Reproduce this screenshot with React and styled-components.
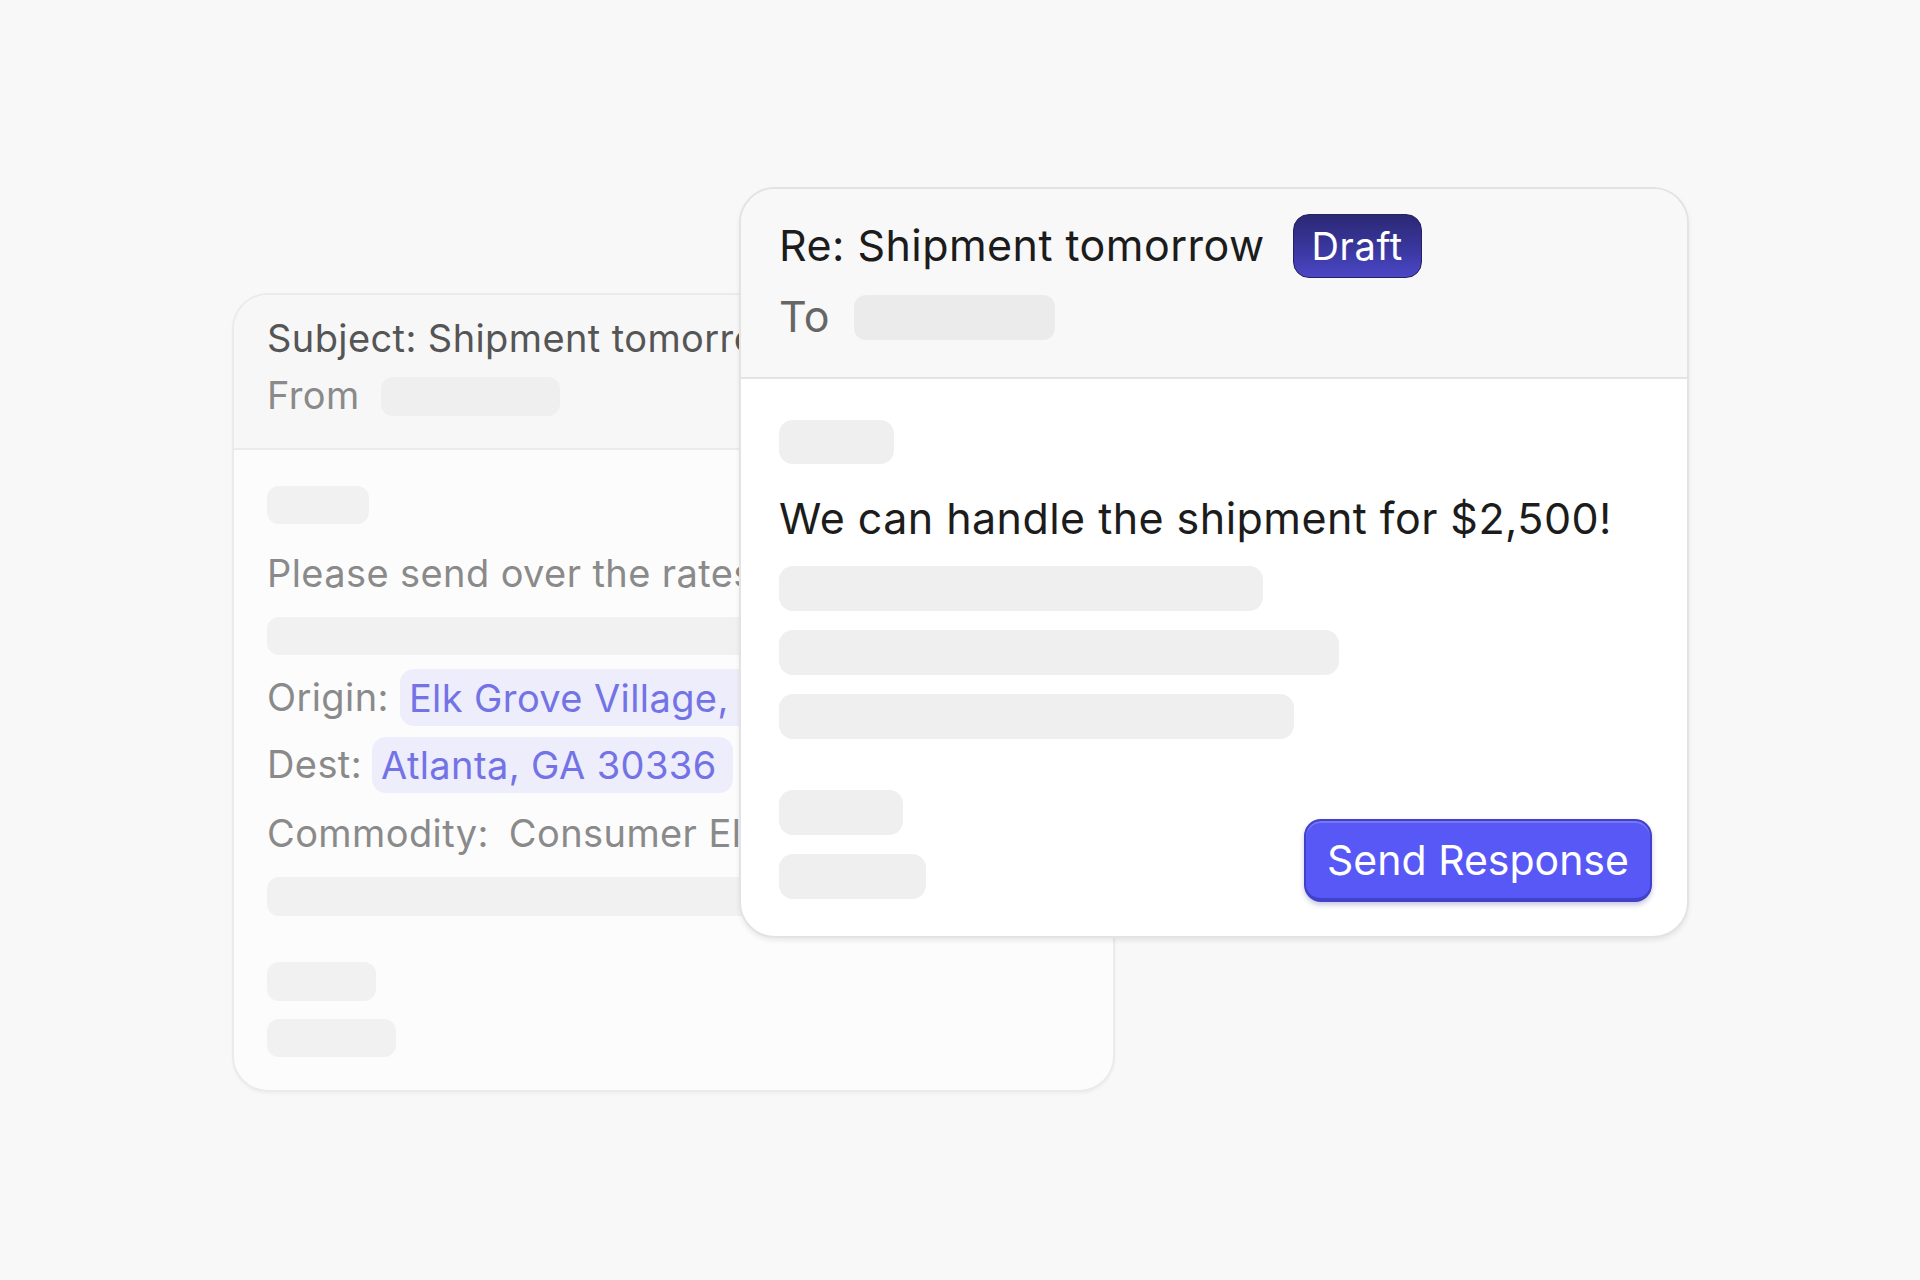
import React from "react";
import styled, { createGlobalStyle } from "styled-components";

const Global = createGlobalStyle`
  html, body { margin: 0; padding: 0; background: #f8f8f8; }
  body { font-family: Inter, "Noto Sans", "Liberation Sans", sans-serif; }
  * { box-sizing: border-box; }
`;

const Page = styled.div`
  min-height: 1280px;
  padding: 187px 0 0 232px;
  background: #f8f8f8;
`;

const Stage = styled.div`
  display: grid;
  grid-template-columns: max-content;
  grid-template-rows: max-content;
`;

const Card = styled.div`
  grid-area: 1 / 1;
  align-self: start;
  justify-self: start;
  display: flex;
  flex-direction: column;
  overflow: hidden;
  border-radius: 36px;
`;

const BackCard = styled(Card)`
  margin-top: 106px;
  width: 883px;
  height: 799px;
  background: #fcfcfc;
  border: 2px solid #ebebeb;
  box-shadow: 0 2px 3px rgba(0, 0, 0, 0.04);
`;

const FrontCard = styled(Card)`
  margin-left: 507px;
  width: 950px;
  height: 751px;
  background: #ffffff;
  border: 2px solid #e3e3e3;
  box-shadow: 0 3px 5px rgba(0, 0, 0, 0.07);
  z-index: 1;
`;

const BackHeader = styled.div`
  background: #f7f7f7;
  border-bottom: 2px solid #ebebeb;
  padding: 22px 33px 30px;
  display: flex;
  flex-direction: column;
  gap: 13px;
`;

const FrontHeader = styled.div`
  background: #f8f8f8;
  border-bottom: 2px solid #e4e4e4;
  padding: 25px 38px 36px;
  display: flex;
  flex-direction: column;
  gap: 15px;
`;

const Row = styled.div`
  display: flex;
  align-items: center;
  gap: ${(p) => p.$gap || 0}px;
  height: ${(p) => p.$h}px;
  margin-top: ${(p) => p.$mt || 0}px;
  white-space: nowrap;
`;

const Text = styled.span`
  font-size: ${(p) => p.$size}px;
  letter-spacing: ${(p) => p.$ls || 0}px;
  line-height: 1.2;
  color: ${(p) => p.$color};
  font-weight: 400;
  white-space: nowrap;
`;

const Skel = styled.div`
  flex: none;
  width: ${(p) => p.$w}px;
  height: ${(p) => p.$h}px;
  margin-top: ${(p) => p.$mt || 0}px;
  border-radius: ${(p) => p.$r || 13}px;
  background: ${(p) => p.$bg || "#efefef"};
`;

const Badge = styled.span`
  display: inline-flex;
  align-items: center;
  height: 64px;
  padding: 0 18px;
  border-radius: 16px;
  background: linear-gradient(180deg, #2b2874 0%, #3a379f 55%, #4b47c6 100%);
  border: 1px solid #25225f;
  color: #ffffff;
  font-size: 38px;
  letter-spacing: 0.6px;
  font-weight: 400;
`;

const Body = styled.div`
  display: flex;
  flex-direction: column;
  align-items: flex-start;
  padding: ${(p) => p.$pad};
  flex: 1;
`;

const Chip = styled.span`
  display: inline-flex;
  align-items: center;
  height: ${(p) => p.$h}px;
  padding: 0 16px 0 9px;
  border-radius: 14px;
  background: #ededfc;
  color: #7373e6;
  font-size: 38px;
  letter-spacing: 0.4px;
`;

const Footer = styled.div`
  margin-top: 51px;
  width: 100%;
  display: flex;
  justify-content: space-between;
  align-items: flex-end;
`;

const Stack = styled.div`
  display: flex;
  flex-direction: column;
  gap: 19px;
  margin-bottom: 3px;
`;

const Button = styled.button`
  width: 348px;
  height: 83px;
  border-radius: 17px;
  border: 2px solid #4141c9;
  border-bottom-width: 4px;
  background: #5858f6;
  box-shadow: inset 0 2px 0 rgba(255, 255, 255, 0.18), 0 3px 5px rgba(40, 40, 140, 0.25);
  color: #ffffff;
  font-family: Inter, "Noto Sans", sans-serif;
  font-size: 41px;
  font-weight: 400;
  padding: 0;
  cursor: pointer;
`;

const BACK = { $size: 38, $ls: 0.4 };
const FRONT = { $size: 43, $ls: 0.45 };

export default function App() {
  return (
    <>
      <Global />
      <Page>
        <Stage>
          <BackCard>
            <BackHeader>
              <Row $h={44}>
                <Text {...BACK} $color="#555555">Subject: Shipment tomorrow</Text>
              </Row>
              <Row $h={44} $gap={21}>
                <Text {...BACK} $color="#8a8a8a">From</Text>
                <Skel $w={179} $h={39} $r={12} $bg="#efefef" />
              </Row>
            </BackHeader>
            <Body $pad="36px 33px 0">
              <Skel $w={102} $h={38} $r={12} $bg="#f1f1f1" />
              <Row $h={45} $mt={27}>
                <Text {...BACK} $color="#8a8a8a">Please send over the rates for this load</Text>
              </Row>
              <Skel $w={640} $h={38} $r={12} $mt={21} $bg="#f1f1f1" />
              <Row $h={57} $mt={14} $gap={11}>
                <Text {...BACK} $color="#8a8a8a">Origin:</Text>
                <Chip $h={57}>Elk Grove Village, IL 60007</Chip>
              </Row>
              <Row $h={56} $mt={11} $gap={10}>
                <Text {...BACK} $color="#8a8a8a">Dest:</Text>
                <Chip $h={56}>Atlanta, GA 30336</Chip>
              </Row>
              <Row $h={56} $mt={13} $gap={20}>
                <Text {...BACK} $color="#8a8a8a">Commodity:</Text>
                <Text {...BACK} $color="#8a8a8a">Consumer Electronics</Text>
              </Row>
              <Skel $w={640} $h={39} $r={12} $mt={15} $bg="#f1f1f1" />
              <Skel $w={109} $h={39} $r={12} $mt={46} $bg="#f1f1f1" />
              <Skel $w={129} $h={38} $r={12} $mt={18} $bg="#f1f1f1" />
            </Body>
          </BackCard>

          <FrontCard>
            <FrontHeader>
              <Row $h={64} $gap={28}>
                <Text {...FRONT} $color="#1c1c1c">Re: Shipment tomorrow</Text>
                <Badge>Draft</Badge>
              </Row>
              <Row $h={48} $gap={24}>
                <Text {...FRONT} $color="#666666">To</Text>
                <Skel $w={201} $h={45} $r={12} $bg="#ebebeb" />
              </Row>
            </FrontHeader>
            <Body $pad="41px 35px 0 38px">
              <Skel $w={115} $h={44} $r={14} />
              <Row $h={50} $mt={30}>
                <Text {...FRONT} $color="#1c1c1c">We can handle the shipment for $2,500!</Text>
              </Row>
              <Skel $w={484} $h={45} $r={14} $mt={22} />
              <Skel $w={560} $h={45} $r={14} $mt={19} />
              <Skel $w={515} $h={45} $r={14} $mt={19} />
              <Footer>
                <Stack>
                  <Skel $w={124} $h={45} $r={14} />
                  <Skel $w={147} $h={45} $r={14} />
                </Stack>
                <Button>Send Response</Button>
              </Footer>
            </Body>
          </FrontCard>
        </Stage>
      </Page>
    </>
  );
}
